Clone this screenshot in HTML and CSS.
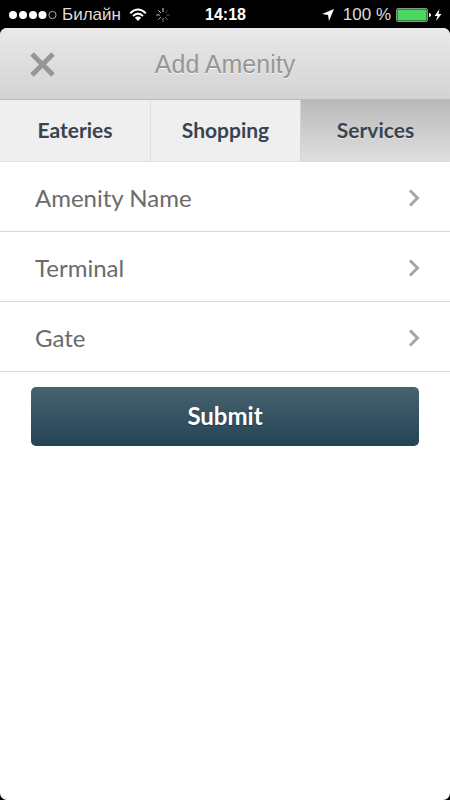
FILE: index.html
```html
<!DOCTYPE html>
<html lang="en">
<head>
<meta charset="utf-8">
<meta name="viewport" content="width=device-width, initial-scale=1">
<title>Add Amenity</title>
<link rel="stylesheet" href="styles.css">
</head>
<body>
<div class="status">
  <div class="status-side">
    <svg class="signal" width="48" height="10" viewBox="0 0 48 10" aria-hidden="true">
      <circle cx="4" cy="5" r="4"/><circle cx="14" cy="5" r="4"/><circle cx="24" cy="5" r="4"/><circle cx="33.5" cy="5" r="4"/><circle class="ring" cx="43.5" cy="5" r="3.6"/>
    </svg>
    <span class="carrier" lang="ru">Билайн</span>
    <svg class="wifi" width="18" height="14" viewBox="0 0 18 14" aria-hidden="true">
      <path class="arc" d="M1.2 5.2Q9-2.2 16.8 5.2M4 8Q9 3.2 14 8"/><path d="M5.8 9.8Q9 7 12.2 9.8L9 13Z"/>
    </svg>
    <svg class="spinner" width="14" height="14" viewBox="0 0 14 14" aria-hidden="true">
      <path opacity=".85" d="M7 4V0M4.9 4.9L2.3 2.3"/><path opacity=".7" d="M4 7H0M4.9 9.1L2.3 11.7"/><path opacity=".5" d="M7 10V14M9.1 9.1L11.7 11.7"/><path opacity=".3" d="M10 7H14M9.1 4.9L11.7 2.3"/>
    </svg>
  </div>
  <time class="clock">14:18</time>
  <div class="status-side status-end">
    <svg class="location" width="12" height="12" viewBox="0 0 12 12" aria-hidden="true"><path d="M12 0L7 12L6 6L0 5Z"/></svg>
    <span class="percent">100 %</span>
    <svg width="46" height="14" viewBox="0 0 46 14" aria-hidden="true">
      <rect x=".5" y=".5" width="31" height="13" rx="1.5" fill="#153d1c" stroke="#8a968b"/><rect x="1.5" y="1.5" width="29" height="11" rx="1" fill="#4bd65f"/><path d="M33 5Q35 5 35 7T33 9Z"/><path d="M43.5 1L38.5 8H41.5L40 13L45.5 6H42.5Z"/>
    </svg>
  </div>
</div>
<div class="screen">
  <header class="header">
    <button class="close" type="button" aria-label="Close">
      <svg width="28" height="28" viewBox="0 0 28 28" aria-hidden="true"><path d="M4 4L25 25M25 4L4 25"/></svg>
    </button>
    <h1 class="title">Add Amenity</h1>
  </header>
  <nav class="tabs">
    <button class="tab" type="button">Eateries</button>
    <button class="tab" type="button">Shopping</button>
    <button class="tab active" type="button" aria-current="true">Services</button>
  </nav>
  <main>
    <button class="row" type="button">Amenity Name<svg class="chevron" width="12" height="18" viewBox="0 0 12 18" aria-hidden="true"><path d="M2 1.5L9.5 9L2 16.5"/></svg></button>
    <button class="row" type="button">Terminal<svg class="chevron" width="12" height="18" viewBox="0 0 12 18" aria-hidden="true"><path d="M2 1.5L9.5 9L2 16.5"/></svg></button>
    <button class="row" type="button">Gate<svg class="chevron" width="12" height="18" viewBox="0 0 12 18" aria-hidden="true"><path d="M2 1.5L9.5 9L2 16.5"/></svg></button>
    <div class="actions"><button class="submit" type="submit">Submit</button></div>
  </main>
</div>
</body>
</html>
```
FILE: styles.css
```css
* { box-sizing: border-box; }
body {
  margin: 0;
  min-height: 100vh;
  display: flex;
  flex-direction: column;
  background: #000;
  font-family: Lato, sans-serif;
}
button {
  margin: 0;
  border: 0;
  padding: 0;
  background: none;
  font: inherit;
  cursor: pointer;
}
svg { display: block; flex: none; }
.status {
  height: 28px;
  display: grid;
  grid-template-columns: 1fr auto 1fr;
  align-items: center;
  padding: 1px 8px 0 9px;
  color: #fff;
  fill: #fff;
  font: 17px/20px "Liberation Sans", sans-serif;
}
.status-side { display: flex; align-items: center; }
.status-end { justify-content: flex-end; }
.ring { fill: none; stroke: #aaa; }
.carrier { margin-left: 5px; color: #ddd; }
.wifi { margin-left: 8px; }
.arc { fill: none; stroke: #fff; stroke-width: 2; }
.spinner { margin-left: 9px; fill: none; stroke: #fff; }
.clock { font-size: 16px; font-weight: bold; }
.percent { margin: 0 5px 0 9px; color: #ddd; }
.screen {
  flex: 1;
  overflow: hidden;
  border-radius: 7px;
  background: #fff;
}
.header {
  height: 72px;
  display: grid;
  grid-template-columns: 56px 1fr 56px;
  align-items: center;
  padding: 1px 28px 0;
  border-bottom: 1px solid #bababa;
  background: linear-gradient(#e9e9e9, #d3d3d3);
}
.close svg {
  fill: none;
  stroke: #969696;
  stroke-width: 5;
}
.title {
  margin: 0;
  color: #969696;
  font: 25px/28px "Liberation Sans", sans-serif;
  text-align: center;
  text-shadow: 0 1px 0 #f5f5f5;
}
.tabs {
  height: 62px;
  display: grid;
  grid-template-columns: repeat(3, 1fr);
  border-bottom: 1px solid #dfdfdf;
  background: #efefef;
}
.tab {
  padding-bottom: 3px;
  color: #384450;
  font-size: 21px;
  font-weight: bold;
}
.tab + .tab { border-left: 1px solid #dfdfdf; }
.tab.active {
  border-left-color: #d3d3d3;
  background: linear-gradient(#b9b9b9, #dfdfdf);
  text-shadow: 0 1px 0 #e6e6e6;
}
.row {
  width: 100%;
  height: 70px;
  display: flex;
  align-items: center;
  justify-content: space-between;
  padding: 2px 30px 0 35px;
  border-bottom: 1px solid #d6d9d9;
  color: #6b6b6b;
  font-size: 24px;
}
.chevron { fill: none; stroke: #a0a6ad; stroke-width: 3; }
.actions { padding: 15px 31px; }
.submit {
  width: 100%;
  height: 59px;
  padding-bottom: 2px;
  border-radius: 5px;
  background: linear-gradient(#48636f, #234456);
  color: #fff;
  font-size: 24px;
  font-weight: bold;
  text-shadow: 0 1px 1px #1d3646;
}
```
